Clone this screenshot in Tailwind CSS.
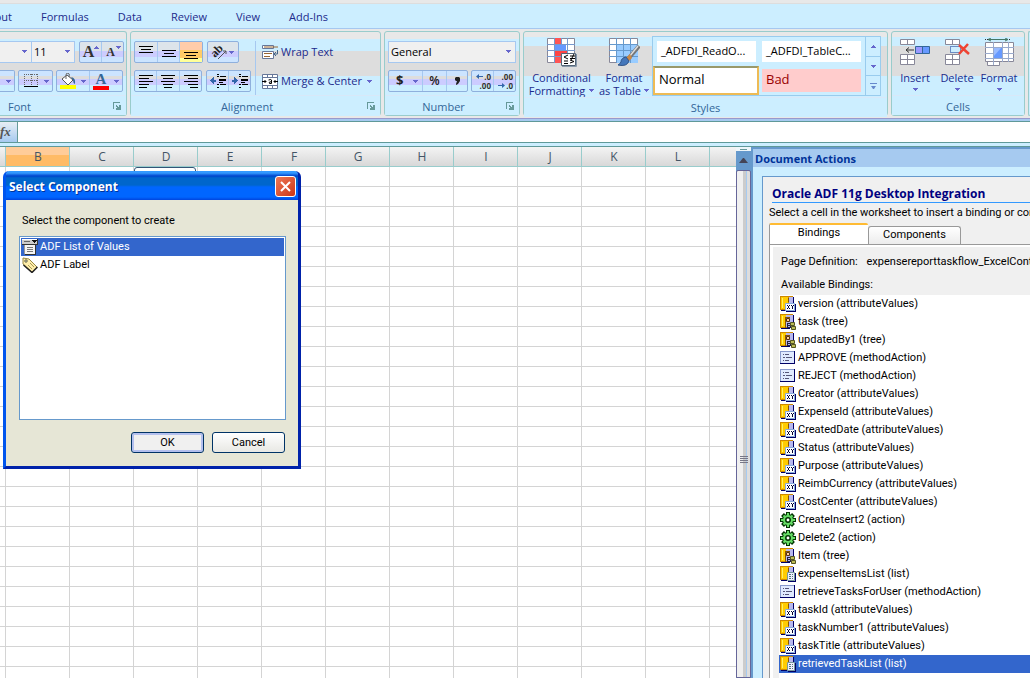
<!DOCTYPE html>
<html lang="en">
<head>
    <meta charset="UTF-8">
    <meta name="viewport" content="width=device-width, initial-scale=1.0">
    <title>Desktop Integration Workbook</title>
    <script src="https://cdn.jsdelivr.net/npm/@tailwindcss/browser@4"></script>
</head>
<body class="h-screen overflow-hidden bg-white font-['Open_Sans',sans-serif] text-[11px] text-black">

<!-- Icon shapes -->
<svg class="hidden">
  <symbol id="caret" viewBox="0 0 5 3"><path d="M0 0h5v1H4v1H3v1H2V2H1V1H0z" fill="#6666cc"/></symbol>
  <symbol id="launcher" viewBox="0 0 8 8"><path d="M0 7V0h7v1H1v6zM3 3h1v1h1v1h1V3h2v5H3V6h1V5H3z" fill="#669999"/></symbol>
  <symbol id="align-top" viewBox="0 0 14 14"><path d="M0 1.500h14M2 4.500h10M0 7.500h14" stroke="#000"/></symbol>
  <symbol id="align-middle" viewBox="0 0 14 14"><path d="M0 5.500h14M2 8.500h10M0 11.500h14" stroke="#000"/></symbol>
  <symbol id="align-bottom" viewBox="0 0 14 14"><path d="M0 7.500h14M2 10.500h10M0 13.500h14" stroke="#000"/></symbol>
  <symbol id="align-left" viewBox="0 0 14 14"><path d="M0 1.500h14M0 4.500h10M0 7.500h14M0 10.500h10M0 13.500h8" stroke="#000"/></symbol>
  <symbol id="align-center" viewBox="0 0 14 14"><path d="M0 1.500h14M2 4.500h10M0 7.500h14M2 10.500h10M3 13.500h8" stroke="#000"/></symbol>
  <symbol id="align-right" viewBox="0 0 14 14"><path d="M0 1.500h14M4 4.500h10M0 7.500h14M4 10.500h10M6 13.500h8" stroke="#000"/></symbol>
  <symbol id="indent-less" viewBox="0 0 16 14"><path d="M7 .5h2M7 2.500h2M10 2.500h6M9 5.500h7M9 6.500h7M9 8.500h4M7 10.500h2M10 10.500h6M7 13.500h2" stroke="#000"/><path d="M0 6.500L4 3v2.500h2v2H4V10z" fill="#3366aa"/></symbol>
  <symbol id="indent-more" viewBox="0 0 16 14"><path d="M7 .5h2M7 2.500h2M10 2.500h6M9 5.500h7M9 6.500h7M9 8.500h4M7 10.500h2M10 10.500h6M7 13.500h2" stroke="#000"/><path d="M6 6.500L2 3v2.500H0v2h2V10z" fill="#3366aa"/></symbol>
  <symbol id="borders" viewBox="0 0 14 14"><path d="M.5 0v12M7.500 0v12M13.500 0v12M0 .5h14M0 6.500h14" stroke="#666" stroke-dasharray="1 1"/><path d="M0 12.500h14" stroke="#000"/></symbol>
  <symbol id="bucket" viewBox="0 0 17 16"><path d="M2 6l5-4 6 5-5 5z" fill="#fff" stroke="#555"/><path d="M6 6V2q0-2 2-2t1 4" fill="none" stroke="#666"/><path d="M11 4q5 1 4 7-2-1-2-4z" fill="#336699"/><path d="M0 12h16v4H0z" fill="#ff0"/></symbol>
  <symbol id="wrap" viewBox="0 0 17 16"><path d="M.5 1.500h11v3H.500zM.5 7.500h11v7H.5z" fill="#fff" stroke="#667799"/><path d="M2 3h14" stroke="#996633"/><path d="M2 9.500h8M2 12.500h6" stroke="#996633"/><path d="M15.500 6v4h-3M14 8l-2 2 2 2" fill="none" stroke="#446688"/></symbol>
  <symbol id="merge" viewBox="0 0 16 15"><path d="M.5.5h15v14H.5zM0 3.500h16M0 11.500h16M5.500 0v3M10.500 0v3M5.500 12v3M10.500 12v3" fill="#fff" stroke="#667799"/><path d="M0 7.500h4M12 7.500h4M2.500 6L4 7.500 2.500 9M13.500 6L12 7.500 13.500 9M6.500 6q3-1 3 0v3.500h-2q-1.500-1.500 2-2" fill="none" stroke="#000"/></symbol>
  <symbol id="cond" viewBox="0 0 30 29"><path d="M.5.5h27v24H.5z" fill="#fff" stroke="#888899"/><path d="M7 0h7v25H7z" fill="#ff5555"/><path d="M8 7h11v5H8z" fill="#6699ff"/><path d="M7 13h13v6H7z" fill="#ff4444"/><path d="M7.500 0v25M14.500 0v6M20.500 0v25M0 6.500h28M0 12.500h28M0 18.500h28" stroke="#7799cc" fill="none"/><path d="M14.500 15.500h14v12h-14z" fill="#fff" stroke="#556677"/><path d="M29.500 16v12.500H15" fill="none" stroke="#8899aa"/><path d="M21 17l-4 2 4 2M17 23h4M17 25.500h4M23 18h5M23 20.500h5M27 16l-3 6M23 22l4 1.500-4 1.500" fill="none" stroke="#000"/></symbol>
  <symbol id="table" viewBox="0 0 31 29"><path d="M.5.5h28v24H.5z" fill="#fff" stroke="#888899"/><path d="M7 6h22v19H7z" fill="#99ccff"/><path d="M7.500 0v25M14.500 0v25M21.500 0v25M0 6.500h29M0 12.500h29M0 18.500h29" stroke="#6699cc"/><path d="M30 8L19 21" stroke="#777777" stroke-width="4"/><path d="M29 8L20 19" stroke="#dddddd" stroke-width="1.500"/><path d="M21 16l-4 4 3 3 3-3z" fill="#cc8844"/><path d="M17 19q-5 1-5 5-1 2-3 3 9 2 11-4z" fill="#4477bb" stroke="#335588"/></symbol>
  <symbol id="insert" viewBox="0 0 30 27"><path d="M.5.5h14v5H.5zM7.500.5v5M.5 15.500h14v10H.5zM7.500 15.500v10M.5 20.500h14" fill="#fff" stroke="#888899"/><path d="M15.500 7.500h14v7h-14z" fill="#6699ff" stroke="#336699"/><path d="M16 8h6v6h-6z" fill="#9999ff"/><path d="M22.500 7.500v7" stroke="#336699"/><path d="M6 11h8M9 8.500L6 11l3 2.500" fill="none" stroke="#333333"/></symbol>
  <symbol id="delete" viewBox="0 0 25 27"><path d="M.5.5h14v5H.5zM7.500.5v5M.5 15.500h14v10H.5zM7.500 15.500v10M.5 20.500h14" fill="#fff" stroke="#888899"/><path d="M5.500 7.500h10v6h-10z" fill="#cceeff" stroke="#003399" stroke-dasharray="1 1"/><path d="M14 6l10 9M23 5l-9 10" stroke="#ee4433" stroke-width="2.500"/></symbol>
  <symbol id="format" viewBox="0 0 31 29"><path d="M1 1.500h26" stroke="#333" stroke-dasharray="1 1"/><path d="M4 1.500h20M7 0L4 1.500 7 3M21 0l3 1.500L21 3" fill="none" stroke="#447766"/><path d="M1.500 4.500h28v19h-28zM3.500 23.500h12v4h-12z" fill="#fff" stroke="#888899"/><path d="M9 9h9v12H9z" fill="#6699ff"/><path d="M9 19l9-10H9z" fill="#99bbff"/><path d="M9.500 4v20M18.500 4v20M24.500 4v20M1 9.500h29M1 15.500h8M19 15.500h11M1 20.500h29M9.500 24v3" stroke="#99aacc"/></symbol>
  <symbol id="attr" viewBox="0 0 16 16"><path d="M0 0h13v14H0z" fill="#cc8800"/><path d="M1 1h7v12H1z" fill="#ffcc00"/><path d="M2 2h1v10H2z" fill="#ffee66"/><path d="M9 1h4v7H9z" fill="#b8b8ee"/><path d="M8 2h1v4H8zM5 8h1v5H5z" fill="#885500"/><path d="M13 1h1v6h-1zM1 14h5v1H1z" fill="#000066"/><path d="M5.500 7.500h9v7h-9z" fill="#fff" stroke="#88aadd"/><path d="M15 8h1v8H6v-1h9z" fill="#000066"/><path d="M7 9h1v1h1V9h1v1H9v2h1v1H9v-1H8v1H7v-1h1v-2H7zM11 9h1v1h1V9h1v1h-1v3h-1v-3h-1z" fill="#000033"/></symbol>
  <symbol id="tree" viewBox="0 0 16 16"><path d="M0 0h13v14H0z" fill="#cc8800"/><path d="M1 1h5v12H1z" fill="#ffcc00"/><path d="M2 2h1v10H2z" fill="#ffee66"/><path d="M6 1h7v12H6z" fill="#b8b8ee"/><path d="M13 1h1v7h-1zM1 14h9v1H1z" fill="#000066"/><path d="M5 3h5v1H6v10H5z" fill="#885500"/><path d="M6.500 4.500h3v3h-3z" fill="#ffcc99" stroke="#553311"/><path d="M7 9h4v5H7z" fill="#222244"/><path d="M8 10h2v1H8zM8 12h2v1H8z" fill="#b8b8ee"/><path d="M10.500 8.500h4v3h-4zM11.500 12.500h4v3h-4z" fill="#bbbb55" stroke="#555522"/></symbol>
  <symbol id="method" viewBox="0 0 16 16"><path d="M0 1h15v13H0z" fill="#000066"/><path d="M0 1h14v12H0z" fill="#8899cc"/><path d="M1 2h13v11H1z" fill="#e0eaff"/><path d="M3 4.500h1M5 4.500h4M3 7.500h2M6 7.500h6M3 10.500h1M5 10.500h4" stroke="#555577"/></symbol>
  <symbol id="gear" viewBox="0 0 16 16"><path d="M8 0v16M0 8h16M2.500 2.500l11 11M13.500 2.500l-11 11" stroke="#003300" stroke-width="4"/><circle cx="8" cy="8" r="5.500" fill="#66dd66" stroke="#003300"/><path d="M8 1v4M8 11v4M1 8h4M11 8h4M3.500 3.500l2 2M12.500 3.500l-2 2M3.500 12.500l2-2M12.500 12.500l-2-2" stroke="#66dd66" stroke-width="2"/><circle cx="8" cy="8" r="2.200" fill="#fff" stroke="#003300" stroke-width="1.500"/></symbol>
  <symbol id="list" viewBox="0 0 16 16"><path d="M0 0h13v14H0z" fill="#cc8800"/><path d="M1 1h7v12H1z" fill="#ffcc00"/><path d="M2 2h1v10H2z" fill="#ffee66"/><path d="M9 1h4v6H9z" fill="#b8b8ee"/><path d="M8 2h1v4H8z" fill="#885500"/><path d="M13 1h1v5h-1zM1 14h6v1H1z" fill="#000066"/><path d="M7.500 6.500h7v8h-7z" fill="#eeeeff" stroke="#779999"/><path d="M15 7h1v9H8v-1h7z" fill="#000066"/><path d="M9 8.500h2M12 8.500h1M9 10.500h2M12 10.500h1M9 12.500h2M12 12.500h1" stroke="#557777"/></symbol>
  <symbol id="lov" viewBox="0 0 16 16"><path d="M0 0h15v5H0z" fill="#cccccc"/><path d="M0 0h15v1H0z" fill="#ffffff"/><path d="M15 0h1v6H0V5h15z" fill="#333333"/><path d="M2 2h6v1H2z" fill="#666666"/><path d="M10 1h5v1h-1v1h-1v1h-1V3h-1V2h-1z" fill="#111111"/><path d="M2 6h11v9H2z" fill="#f4f4f4"/><path d="M2 6h1v9H2z" fill="#999999"/><path d="M5 8.500h6M5 10.500h6M5 12.500h6" stroke="#777777"/><path d="M13 6h1v10H3v-1h10z" fill="#333333"/></symbol>
  <symbol id="label" viewBox="0 0 16 16"><path d="M1 1l6 1 8 8-5 5-9-8z" fill="#ffeeaa" stroke="#998844"/><path d="M1.500 8l8.500 7.500 5.500-5.500" fill="none" stroke="#222222" stroke-width="1.500"/><circle cx="4" cy="4" r="1.200" fill="#fff" stroke="#555533"/><path d="M6 8l4 4M8 6l4 4" stroke="#aa9955"/></symbol>
</svg>

<div class="relative flex h-full flex-col">

  <!-- Ribbon tabs -->
  <div class="h-1 shrink-0 border-b border-[#dddddd] bg-[#e8e8e8]"></div>
  <nav class="flex h-[25px] shrink-0 items-center gap-[29px] border-b border-[#a6c8f0] bg-[#cceeff] pt-[3px] text-[#1c2b8c]">
    <a href="#" class="-ml-7 w-10 text-right">Layout</a>
    <a href="#">Formulas</a>
    <a href="#">Data</a>
    <a href="#">Review</a>
    <a href="#">View</a>
    <a href="#">Add-Ins</a>
  </nav>

  <!-- Ribbon groups -->
  <div class="flex h-[89px] shrink-0 gap-[3px] bg-[#e8e8e8] pt-[2px] pb-[2px] text-[#1c2b8c]">

    <section class="flex w-[127px] shrink-0 flex-col rounded-r-[3px] border border-l-0 border-[#99cccc] bg-[linear-gradient(#e8e8e8_7px,#cceeff_7px,#cceeff_19px,#dddddd_19px,#dddddd_44px,#cceeff_44px)]">
      <div class="flex h-[67px] flex-col gap-[7px] pt-[9px]">
        <div class="flex h-[22px]">
          <div class="relative w-8">
            <select aria-label="Font name" class="h-full w-full appearance-none border border-l-0 border-[#a6c8f0] bg-[#f0f0f0]"><option></option></select>
            <svg class="pointer-events-none absolute top-[9px] right-[5px] h-[3px] w-[5px]"><use href="#caret"/></svg>
          </div>
          <div class="relative mr-1 w-[43px]">
            <select aria-label="Font size" class="h-full w-full appearance-none border border-l-0 border-[#a6c8f0] bg-[#f0f0f0] pl-[2px] text-black"><option>11</option></select>
            <svg class="pointer-events-none absolute top-[9px] right-[5px] h-[3px] w-[5px]"><use href="#caret"/></svg>
          </div>
          <div class="flex w-[45px] divide-x divide-[#a6c8f0] rounded-[2px] border border-[#8fb0dd] bg-[linear-gradient(#dde4ea_9px,#ccccff_9px,#ccccff_15px,#cce4ff_15px)]">
            <button aria-label="Grow font" class="relative flex-1 pr-1 font-['Liberation_Serif',serif] text-[16px] leading-5 font-bold text-[#333333]">A<svg class="absolute top-1 right-[2px] h-[3px] w-[5px] rotate-180"><use href="#caret"/></svg></button>
            <button aria-label="Shrink font" class="relative flex-1 pr-1 font-['Liberation_Serif',serif] text-[12px] leading-5 font-bold text-[#333333]">A<svg class="absolute top-1 right-[2px] h-[3px] w-[5px]"><use href="#caret"/></svg></button>
          </div>
        </div>
        <div class="flex h-[22px] gap-[3px]">
          <button aria-label="Underline" class="flex w-[15px] items-center justify-end rounded-r-[2px] border border-l-0 border-[#8fb0dd] bg-[linear-gradient(#cce4ff_5px,#dddddd_5px,#dddddd_8px,#ccccff_8px,#ccccff_14px,#cceeff_14px)] pr-[3px]"><svg class="h-[3px] w-[5px]"><use href="#caret"/></svg></button>
          <button aria-label="Borders" class="flex w-[35px] items-center justify-between rounded-[2px] border border-[#8fb0dd] bg-[linear-gradient(#cce4ff_5px,#dddddd_5px,#dddddd_8px,#ccccff_8px,#ccccff_14px,#cceeff_14px)] pr-[3px] pl-[5px]"><svg class="h-[14px] w-[14px]" shape-rendering="crispEdges"><use href="#borders"/></svg><svg class="h-[3px] w-[5px]"><use href="#caret"/></svg></button>
          <div class="flex w-[67px] divide-x divide-[#a6c8f0] rounded-[2px] border border-[#8fb0dd] bg-[linear-gradient(#cce4ff_5px,#dddddd_5px,#dddddd_8px,#ccccff_8px,#ccccff_14px,#cceeff_14px)]">
            <button aria-label="Fill color" class="flex flex-1 items-center justify-between px-[3px]"><svg class="h-4 w-[17px]"><use href="#bucket"/></svg><svg class="h-[3px] w-[5px]"><use href="#caret"/></svg></button>
            <button aria-label="Font color" class="flex flex-1 items-center justify-between px-[3px]"><span class="h-[17px] w-4 border-b-4 border-[#ff0000] font-['Liberation_Serif',serif] text-[15px] leading-[13px] font-bold text-[#336699]">A</span><svg class="h-[3px] w-[5px]"><use href="#caret"/></svg></button>
          </div>
        </div>
      </div>
      <footer class="flex flex-1 items-center border-t border-[#d8e8f8] bg-[#cceeff] pt-[3px] text-[#336699]">
        <span class="pl-2">Font</span>
        <button aria-label="Font options" class="mr-[5px] mb-[2px] ml-auto"><svg class="h-2 w-2"><use href="#launcher"/></svg></button>
      </footer>
    </section>

    <section class="flex w-[251px] shrink-0 flex-col rounded-[3px] border border-[#99cccc] bg-[linear-gradient(#e8e8e8_7px,#cceeff_7px,#cceeff_19px,#dddddd_19px,#dddddd_44px,#cceeff_44px)]">
      <div class="flex h-[67px] pt-[9px] pl-[3px]">
        <div class="flex w-[117px] flex-col gap-[7px]">
          <div class="flex h-[22px] gap-1">
            <div class="flex w-[69px] divide-x divide-[#a6c8f0] rounded-[2px] border border-[#8fb0dd] bg-[linear-gradient(#dde4ea_9px,#ccccff_9px,#ccccff_15px,#cce4ff_15px)]">
              <button aria-label="Top align" class="flex flex-1 items-center justify-center"><svg class="h-[14px] w-[14px]" shape-rendering="crispEdges"><use href="#align-top"/></svg></button>
              <button aria-label="Middle align" class="flex flex-1 items-center justify-center"><svg class="h-[14px] w-[14px]" shape-rendering="crispEdges"><use href="#align-middle"/></svg></button>
              <button aria-label="Bottom align" class="flex flex-1 items-center justify-center bg-[linear-gradient(#ffccaa_8px,#ffcc66_8px,#ffcc66_16px,#ffff99_16px)]"><svg class="h-[14px] w-[14px]" shape-rendering="crispEdges"><use href="#align-bottom"/></svg></button>
            </div>
            <button aria-label="Orientation" class="flex w-8 items-center justify-between rounded-[2px] border border-[#8fb0dd] bg-[linear-gradient(#dde4ea_9px,#ccccff_9px,#ccccff_15px,#cce4ff_15px)] pr-1 pl-1">
              <svg class="h-4 w-4 overflow-visible" viewBox="0 0 16 16"><text x="0" y="11" transform="rotate(-45 5 9)" font-family="Liberation Serif" font-size="12" font-weight="bold" fill="#222">ab</text><path d="M6 15L14 7M14 10V7h-3" fill="none" stroke="#555"/></svg>
              <svg class="h-[3px] w-[5px]"><use href="#caret"/></svg>
            </button>
          </div>
          <div class="flex h-[22px] gap-1">
            <div class="flex w-[69px] divide-x divide-[#a6c8f0] rounded-[2px] border border-[#8fb0dd] bg-[linear-gradient(#cce4ff_5px,#dddddd_5px,#dddddd_8px,#ccccff_8px,#ccccff_14px,#cceeff_14px)]">
              <button aria-label="Align left" class="flex flex-1 items-center justify-center"><svg class="h-[14px] w-[14px]" shape-rendering="crispEdges"><use href="#align-left"/></svg></button>
              <button aria-label="Center" class="flex flex-1 items-center justify-center"><svg class="h-[14px] w-[14px]" shape-rendering="crispEdges"><use href="#align-center"/></svg></button>
              <button aria-label="Align right" class="flex flex-1 items-center justify-center"><svg class="h-[14px] w-[14px]" shape-rendering="crispEdges"><use href="#align-right"/></svg></button>
            </div>
            <div class="flex w-[45px] divide-x divide-[#a6c8f0] rounded-[2px] border border-[#8fb0dd] bg-[linear-gradient(#cce4ff_5px,#dddddd_5px,#dddddd_8px,#ccccff_8px,#ccccff_14px,#cceeff_14px)]">
              <button aria-label="Decrease indent" class="flex flex-1 items-center justify-center"><svg class="h-[14px] w-4" shape-rendering="crispEdges"><use href="#indent-less"/></svg></button>
              <button aria-label="Increase indent" class="flex flex-1 items-center justify-center"><svg class="h-[14px] w-4" shape-rendering="crispEdges"><use href="#indent-more"/></svg></button>
            </div>
          </div>
        </div>
        <div class="mr-[6px] ml-1 h-[54px] border-l border-[#a6c8f0]"></div>
        <div class="flex flex-col gap-[7px]">
          <button class="flex h-[22px] items-center gap-[2px]"><svg class="h-4 w-[17px]"><use href="#wrap"/></svg>Wrap Text</button>
          <button class="flex h-[22px] items-center gap-[3px] whitespace-nowrap"><svg class="h-[15px] w-4"><use href="#merge"/></svg>Merge &amp; Center<svg class="ml-[2px] h-[3px] w-[5px]"><use href="#caret"/></svg></button>
        </div>
      </div>
      <footer class="flex flex-1 items-center border-t border-[#d8e8f8] bg-[#cceeff] pt-[3px] text-[#336699]">
        <span class="flex-1"></span><span class="pr-3">Alignment</span>
        <span class="flex flex-1 justify-end pr-[5px] pb-[2px]"><button aria-label="Alignment options"><svg class="h-2 w-2"><use href="#launcher"/></svg></button></span>
      </footer>
    </section>

    <section class="flex w-[136px] shrink-0 flex-col rounded-[3px] border border-[#99cccc] bg-[linear-gradient(#e8e8e8_7px,#cceeff_7px,#cceeff_19px,#dddddd_19px,#dddddd_44px,#cceeff_44px)]">
      <div class="flex h-[67px] flex-col gap-[7px] px-[3px] pt-[9px]">
        <div class="relative h-[22px]">
          <select aria-label="Number format" class="h-full w-full appearance-none border border-[#a6c8f0] bg-[#f0f0f0] pl-[2px] text-black"><option>General</option></select>
          <svg class="pointer-events-none absolute top-[9px] right-[5px] h-[3px] w-[5px]"><use href="#caret"/></svg>
        </div>
        <div class="flex h-[22px] justify-between">
          <div class="flex w-20 divide-x divide-[#a6c8f0] rounded-[2px] border border-[#8fb0dd] bg-[linear-gradient(#cce4ff_5px,#dddddd_5px,#dddddd_8px,#ccccff_8px,#ccccff_14px,#cceeff_14px)] text-[#222222]">
            <button aria-label="Currency" class="flex w-[34px] items-center justify-between pr-1 pl-[7px] text-[13px] font-bold">$<svg class="h-[3px] w-[5px]"><use href="#caret"/></svg></button>
            <button class="w-6 text-[12px] font-semibold">%</button>
            <button aria-label="Comma style" class="flex flex-1 items-center justify-center"><svg class="h-2 w-[5px]" viewBox="0 0 5 8"><path d="M1 0h3l1 1v3L3 7 1 8V7l1-3H1L0 3V1z" fill="#222"/></svg></button>
          </div>
          <div class="flex w-[45px] divide-x divide-[#a6c8f0] rounded-[2px] border border-[#8fb0dd] bg-[linear-gradient(#cce4ff_5px,#dddddd_5px,#dddddd_8px,#ccccff_8px,#ccccff_14px,#cceeff_14px)] text-[8px] leading-[9px] font-bold text-[#333333]">
            <button aria-label="Increase decimal" class="flex flex-1 flex-col items-end justify-center pr-[2px]"><span class="flex items-center gap-px"><svg class="h-[5px] w-[7px]" viewBox="0 0 7 5"><path d="M0 2.500L3 0v2h4v1H3v2z" fill="#3366aa"/></svg>.0</span><span>.00</span></button>
            <button aria-label="Decrease decimal" class="flex flex-1 flex-col items-end justify-center pr-[2px]"><span>.00</span><span class="flex items-center gap-px"><svg class="h-[5px] w-[7px]" viewBox="0 0 7 5"><path d="M7 2.500L4 0v2H0v1h4v2z" fill="#3366aa"/></svg>.0</span></button>
          </div>
        </div>
      </div>
      <footer class="flex flex-1 items-center border-t border-[#d8e8f8] bg-[#cceeff] pt-[3px] text-[#336699]">
        <span class="flex-1"></span><span class="pr-3">Number</span>
        <span class="flex flex-1 justify-end pr-[5px] pb-[2px]"><button aria-label="Number options"><svg class="h-2 w-2"><use href="#launcher"/></svg></button></span>
      </footer>
    </section>

    <section class="flex w-[365px] shrink-0 flex-col rounded-[3px] border border-[#99cccc] bg-[linear-gradient(#e8e8e8_5px,#cceeff_5px,#cceeff_14px,#dddddd_14px,#dddddd_44px,#cceeff_44px)]">
      <div class="flex h-[67px] pt-1 pl-[3px]">
        <button class="flex w-[69px] flex-col items-center pt-[2px] leading-[13px]"><svg class="mb-1 h-[29px] w-[30px]"><use href="#cond"/></svg><span>Conditional</span><span class="flex items-center gap-1">Formatting<svg class="h-[3px] w-[5px]"><use href="#caret"/></svg></span></button>
        <button class="flex w-[56px] flex-col items-center pt-[2px] leading-[13px] whitespace-nowrap"><svg class="mb-1 h-[29px] w-[31px]"><use href="#table"/></svg><span>Format</span><span class="flex items-center gap-[3px]">as Table<svg class="h-[3px] w-[5px]"><use href="#caret"/></svg></span></button>
        <div class="flex h-[60px] w-[229px] border border-[#99ccee] bg-[#cceeff]">
          <div class="grid flex-1 grid-cols-2 grid-rows-2 text-[11px] text-black">
            <button class="m-1 mr-[3px] overflow-hidden bg-white pl-1 text-left">_ADFDI_ReadO...</button>
            <button class="m-1 ml-[3px] overflow-hidden bg-white pl-1 text-left">_ADFDI_TableC...</button>
            <button class="border-2 border-[#eebb55] border-t-[#99996a] bg-white px-1 pb-[3px] text-left text-[13px] leading-5">Normal</button>
            <button class="my-[3px] mr-1 ml-[3px] bg-[#ffcccc] px-1 pb-[3px] text-left text-[13px] leading-5 text-[#990000]">Bad</button>
          </div>
          <div class="flex w-[15px] flex-col divide-y divide-[#99ccee] border-l border-[#99ccee]">
            <button aria-label="Previous styles" class="flex flex-1 items-center justify-center"><svg class="h-[3px] w-[5px] rotate-180"><use href="#caret"/></svg></button>
            <button aria-label="Next styles" class="flex flex-1 items-center justify-center"><svg class="h-[3px] w-[5px]"><use href="#caret"/></svg></button>
            <button aria-label="More styles" class="flex flex-1 items-center justify-center"><svg class="h-[6px] w-[7px]" viewBox="0 0 7 6"><path d="M0 0h7v1H0zM1 3h5L4 6H3z" fill="#6688cc"/></svg></button>
          </div>
        </div>
      </div>
      <footer class="flex flex-1 items-center justify-center border-t border-[#d8e8f8] bg-[#cceeff] pt-[2px] text-[#336699]">Styles</footer>
    </section>

    <section class="flex w-[134px] shrink-0 flex-col rounded-[3px] border border-[#99cccc] bg-[linear-gradient(#e8e8e8_5px,#cceeff_5px,#cceeff_14px,#dddddd_14px,#dddddd_44px,#cceeff_44px)]">
      <div class="flex h-[67px] pt-[6px] pl-[2px]">
        <button class="flex w-[42px] flex-col items-center leading-[13px]"><svg class="mb-1 h-[29px] w-[30px]"><use href="#insert"/></svg>Insert<svg class="mt-[4px] h-[3px] w-[5px]"><use href="#caret"/></svg></button>
        <button class="flex w-[42px] flex-col items-center leading-[13px]"><svg class="mb-1 h-[29px] w-[25px]"><use href="#delete"/></svg>Delete<svg class="mt-[4px] h-[3px] w-[5px]"><use href="#caret"/></svg></button>
        <button class="flex w-[42px] flex-col items-center leading-[13px]"><svg class="mb-1 h-[29px] w-[31px]"><use href="#format"/></svg>Format<svg class="mt-[4px] h-[3px] w-[5px]"><use href="#caret"/></svg></button>
      </div>
      <footer class="flex flex-1 items-center justify-center border-t border-[#d8e8f8] bg-[#cceeff] pt-[3px] text-[#336699]">Cells</footer>
    </section>
    <section class="flex-1 rounded-l-[3px] border border-r-0 border-[#99cccc] bg-[#cceeff]"></section>
  </div>
  <div class="h-[3px] shrink-0 border-t border-[#9999cc] bg-[#a6caf0]"></div>

  <!-- Formula bar -->
  <div class="flex h-[22px] shrink-0 border-y border-[#5f9999]">
    <label for="formula" class="w-[18px] border-r border-[#669999] bg-linear-to-b from-[#e8eef4] to-[#a6caf0] font-['Liberation_Serif',serif] text-[13px] leading-5 font-bold text-[#555555] italic">fx</label>
    <input id="formula" type="text" class="flex-1 bg-white px-1 outline-none">
  </div>
  <div class="h-[3px] shrink-0 bg-[#cceeff]"></div>

  <div class="flex min-h-0 flex-1 border-t border-[#5f9999]">

    <!-- Worksheet -->
    <div class="relative min-w-0 flex-1 overflow-hidden">
      <table class="w-[773px] table-fixed border-collapse">
        <thead>
          <tr id="columns" class="h-[19px] bg-linear-to-b from-[#f4f4f4] to-[#d8d8d8] text-[12px] leading-[17px] text-[#445566]"></tr>
        </thead>
        <tbody id="rows"></tbody>
      </table>
      <div class="absolute top-5 left-[134px] h-4 w-[62px] rounded-[3px] border border-[#335577] bg-white"></div>
    </div>

    <!-- Vertical scroll bar -->
    <div class="flex w-[15px] shrink-0 flex-col bg-[#6699cc]">
      <div class="flex h-1 shrink-0 items-center justify-center bg-[#eef6fa]"><div class="h-px w-[7px] bg-[#669999]"></div></div>
      <button aria-label="Scroll up" class="flex h-[19px] items-center justify-center"><svg class="h-[5px] w-[9px]" viewBox="0 0 9 5"><path d="M4 0h1l4 5H0z" fill="#444455"/></svg></button>
      <div class="flex flex-1 flex-col items-center rounded-t-[2px] border border-[#666699] bg-[linear-gradient(to_right,#f0f0f0_6px,#cccccc_6px,#cccccc_9px,#a6caf0_9px,#a6caf0_10px,#dddddd_10px)] pt-[285px]">
        <svg class="h-2 w-2" viewBox="0 0 8 8"><path d="M0 .5h8M0 2.500h8M0 4.500h8M0 6.500h8" stroke="#777788"/></svg>
      </div>
    </div>

    <!-- Document Actions pane -->
    <aside class="flex w-[279px] shrink-0 flex-col border-t-2 border-l-2 border-[#6699cc] bg-[#cceeff] font-['Roboto',sans-serif]">
      <h2 class="h-[18px] bg-[#a6caf0] pl-[2px] font-['Open_Sans',sans-serif] leading-5 font-bold text-[#003399]">Document Actions</h2>
      <div class="mt-[9px] ml-[9px] flex min-h-0 flex-1 flex-col overflow-hidden border-t border-l border-[#6699cc] bg-[#f0f0f0] pl-[6px] whitespace-nowrap">
        <h3 class="mt-[9px] ml-[3px] border-b border-[#3399ff] font-['Open_Sans',sans-serif] text-[12px] leading-4 font-bold text-[#000080]">Oracle ADF 11g Desktop Integration</h3>
        <p class="mt-[2px] leading-4">Select a cell in the worksheet to insert a binding or component</p>
        <div class="mt-[2px] flex items-end">
          <button class="h-[21px] w-[99px] rounded-t-[2px] border-t-2 border-l border-t-[#ffbb33] border-l-[#999999] bg-white pb-[2px]">Bindings</button>
          <button class="h-[18px] w-[93px] rounded-t-[3px] border border-b-0 border-[#999999] bg-linear-to-b from-white to-[#ececec]">Components</button>
        </div>
        <div class="flex min-h-0 flex-1 flex-col border-t border-l border-[#999999] bg-white pt-[2px] pl-[3px]">
          <div class="flex min-h-0 flex-1 flex-col bg-[#f0f0f0] pl-[6px]">
            <p class="mt-[7px] ml-[2px] leading-4">Page Definition: <span class="ml-[6px]">expensereporttaskflow_ExcelControl</span></p>
            <p id="bindings-label" class="mt-[7px] ml-[2px] leading-4">Available Bindings:</p>
            <ul id="bindings" role="listbox" aria-labelledby="bindings-label" class="mt-[2px] min-h-0 flex-1 bg-white"></ul>
          </div>
        </div>
      </div>
    </aside>
  </div>

  <!-- Select Component dialog -->
  <div role="dialog" aria-labelledby="dialog-title" class="absolute top-[171px] left-[3px] flex h-[298px] w-[298px] flex-col rounded-t-[6px] border-r-[3px] border-b-[3px] border-l-[3px] border-[#0055ee] border-r-[#0022aa] border-b-[#0022aa] bg-[#e6e6d6] font-['Roboto',sans-serif]">
    <div class="flex h-[29px] shrink-0 items-center rounded-t-[4px] bg-[linear-gradient(#3399ff_2px,#0044cc_5px,#0066cc_7px,#0066cc_14px,#0066ff_16px,#0066ff_26px,#0044dd)] pt-[2px]">
      <h1 id="dialog-title" class="flex-1 pl-[3px] font-['Open_Sans',sans-serif] text-[12px] font-bold text-white text-shadow-[1px_1px_0_#003399]">Select Component</h1>
      <button aria-label="Close" class="mr-[2px] flex h-[21px] w-[21px] items-center justify-center rounded-[3px] border border-white bg-linear-to-br from-[#ee7755] to-[#cc3311]"><svg class="h-[11px] w-[11px]" viewBox="0 0 11 11"><path d="M1 1l9 9M10 1l-9 9" stroke="#fff" stroke-width="2"/></svg></button>
    </div>
    <div class="flex flex-1 flex-col pt-[13px] pr-3 pb-[13px] pl-[13px]">
      <p id="components-label" class="pl-[3px] leading-4">Select the component to create</p>
      <ul id="components" role="listbox" aria-labelledby="components-label" class="mt-[7px] h-[184px] border border-[#6699cc] bg-white p-px"></ul>
      <div class="mt-3 flex justify-end gap-2 pr-px">
        <button class="h-[21px] w-[73px] rounded-[3px] border border-[#003366] bg-[#f0f0f0] pt-px inset-ring-2 inset-ring-[#b4c0ee]">OK</button>
        <button class="h-[21px] w-[73px] rounded-[3px] border border-[#003366] bg-linear-to-b from-white to-[#e8e8e4] pt-px">Cancel</button>
      </div>
    </div>
  </div>
</div>

<script>
    const columns = ['', 'B', 'C', 'D', 'E', 'F', 'G', 'H', 'I', 'J', 'K', 'L', ''];
    const bindings = [
        ['attr', 'version (attributeValues)'],
        ['tree', 'task (tree)'],
        ['tree', 'updatedBy1 (tree)'],
        ['method', 'APPROVE (methodAction)'],
        ['method', 'REJECT (methodAction)'],
        ['attr', 'Creator (attributeValues)'],
        ['attr', 'ExpenseId (attributeValues)'],
        ['attr', 'CreatedDate (attributeValues)'],
        ['attr', 'Status (attributeValues)'],
        ['attr', 'Purpose (attributeValues)'],
        ['attr', 'ReimbCurrency (attributeValues)'],
        ['attr', 'CostCenter (attributeValues)'],
        ['gear', 'CreateInsert2 (action)'],
        ['gear', 'Delete2 (action)'],
        ['tree', 'Item (tree)'],
        ['list', 'expenseItemsList (list)'],
        ['method', 'retrieveTasksForUser (methodAction)'],
        ['attr', 'taskId (attributeValues)'],
        ['attr', 'taskNumber1 (attributeValues)'],
        ['attr', 'taskTitle (attributeValues)'],
        ['list', 'retrievedTaskList (list)']
    ];
    const components = [['lov', 'ADF List of Values'], ['label', 'ADF Label']];

    // Column headers, the first one is the cut-off column A
    document.getElementById('columns').innerHTML = columns.map((name, i) => {
        const width = i === 0 ? 'w-[5px]' : 'w-16';
        const fill = name === 'B' ? 'bg-[linear-gradient(#ffcc99_8px,#ffbb66_8px)]' : '';
        return `<th class="${width} ${fill} border-r border-b border-[#99cccc] pt-px pr-0 pb-0 pl-[2px] font-normal">${name}</th>`;
    }).join('');

    // Empty cells
    const cells = columns.map(() => '<td class="border-r border-b border-[#d4d4d4] p-0"></td>').join('');
    document.getElementById('rows').innerHTML = `<tr class="h-5">${cells}</tr>`.repeat(26);

    function fillList(id, items, selected) {
        document.getElementById(id).innerHTML = items.map(([icon, text], i) => {
            const state = i === selected ? 'bg-[#3366cc] text-white' : '';
            return `<li role="option" class="flex h-[18px] items-center gap-[2px] pl-px ${state}"><svg class="h-4 w-4 shrink-0"><use href="#${icon}"/></svg>${text}</li>`;
        }).join('');
    }

    fillList('bindings', bindings, 20);
    fillList('components', components, 0);
</script>

</body>
</html>
